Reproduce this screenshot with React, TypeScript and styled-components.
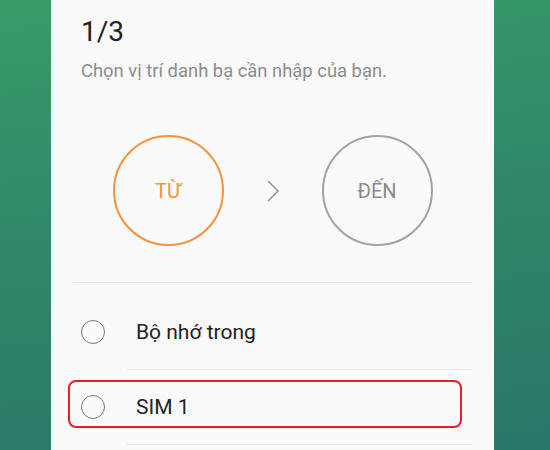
import styled, { createGlobalStyle } from "styled-components";

const GlobalStyle = createGlobalStyle`
    html, body {
        margin: 0;
        padding: 0;
        height: 450px;
        overflow: hidden;
    }
    body {
        background: linear-gradient(172deg, #3a9b6a 0%, #2f8668 50%, #29786a 100%);
        font-family: Roboto, "Noto Sans", sans-serif;
    }
`;

const Page = styled.div`
    display: grid;
    grid-template-columns: 51px 443px 1fr;
    height: 450px;
`;

const Panel = styled.div`
    grid-column: 2;
    background: #fafafa;
    padding: 0 22px;
    display: flex;
    flex-direction: column;
`;

const Title = styled.div`
    margin: 18px 0 0 8px;
    font-size: 28px;
    line-height: 28px;
    color: #222;
`;

const Subtitle = styled.div`
    margin: 15px 0 0 8px;
    font-size: 18.4px;
    line-height: 20px;
    color: #8c8c8c;
`;

const Steps = styled.div`
    display: flex;
    align-items: center;
    justify-content: center;
    gap: 43px;
    margin-top: 54px;
`;

const Step = styled.div<{ active?: boolean }>`
    width: 111px;
    height: 111px;
    box-sizing: border-box;
    border-radius: 50%;
    border: 2px solid ${(props) => (props.active ? "#f6923d" : "#a3a3a3")};
    color: ${(props) => (props.active ? "#f6923d" : "#8a8a8a")};
    display: flex;
    align-items: center;
    justify-content: center;
    font-size: 20px;
`;

const Divider = styled.div<{ inset?: boolean }>`
    height: 1px;
    background: #e6e6e6;
    margin-left: ${(props) => (props.inset ? "54px" : "0")};
`;

const List = styled.div`
    margin-top: 36px;
    display: flex;
    flex-direction: column;
`;

const Row = styled.div<{ first?: boolean }>`
    position: relative;
    height: 74px;
    display: flex;
    align-items: center;
    margin-top: ${(props) => (props.first ? "12px" : "0")};
`;

const Radio = styled.span`
    width: 24px;
    height: 24px;
    box-sizing: border-box;
    border-radius: 50%;
    border: 1.6px solid #767676;
    margin: 0 31px 0 8px;
`;

const Label = styled.span`
    font-size: 21px;
    color: #222;
`;

const Highlight = styled.div`
    position: absolute;
    left: -5px;
    right: 10px;
    top: 10px;
    bottom: 16px;
    border: 2px solid #ee1c24;
    border-radius: 8px;
`;

const Chevron = () => (
    <svg width="12" height="22" viewBox="0 0 12 22">
        <path d="M1 1 L11 11 L1 21" fill="none" stroke="#8a8a8a" strokeWidth="1.4" />
    </svg>
);

const App = () => {
    return (
        <Page>
            <GlobalStyle />
            <Panel>
                <Title>1/3</Title>
                <Subtitle>Chọn vị trí danh bạ cần nhập của bạn.</Subtitle>
                <Steps>
                    <Step active>TỪ</Step>
                    <Chevron />
                    <Step>ĐẾN</Step>
                </Steps>
                <List>
                    <Divider />
                    <Row first>
                        <Radio />
                        <Label>Bộ nhớ trong</Label>
                    </Row>
                    <Divider inset />
                    <Row>
                        <Radio />
                        <Label>SIM 1</Label>
                        <Highlight />
                    </Row>
                    <Divider inset />
                </List>
            </Panel>
        </Page>
    );
};

export default App;
